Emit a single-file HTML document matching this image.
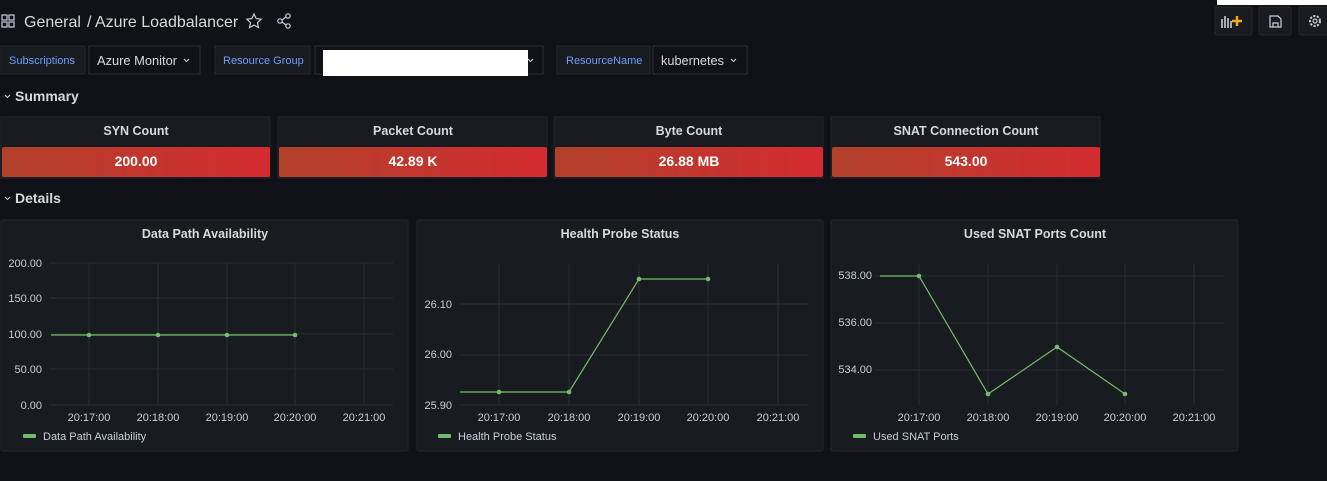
<!DOCTYPE html>
<html><head><meta charset="utf-8"><style>
html,body{margin:0;padding:0;background:#111217;width:1327px;height:481px;overflow:hidden;font-family:"Liberation Sans",sans-serif}
</style></head><body>
<svg width="1327" height="481" viewBox="0 0 1327 481" xmlns="http://www.w3.org/2000/svg" font-family="Liberation Sans, sans-serif">
<defs>
<linearGradient id="rg" x1="0" x2="1"><stop offset="0" stop-color="#b0402a"/><stop offset="1" stop-color="#d42b30"/></linearGradient>
</defs>
<rect width="1327" height="481" fill="#111217"/>
<g fill="none" stroke="#ccccdc" stroke-width="1.2">
<rect x="2" y="15" width="5" height="5"/><rect x="9" y="15" width="5" height="5"/><rect x="2" y="22" width="5" height="5"/><rect x="9" y="22" width="5" height="5"/>
</g>
<text x="24" y="27" fill="#d8d9da" font-size="16">General</text>
<text x="87" y="27" fill="#d8d9da" font-size="16">/ Azure Loadbalancer</text>
<path d="M254 14 l2.2 4.6 5 .6 -3.7 3.4 1 5 -4.5-2.5 -4.5 2.5 1-5 -3.7-3.4 5-.6z" fill="none" stroke="#ccccdc" stroke-width="1.2"/>
<g fill="none" stroke="#ccccdc" stroke-width="1.2"><circle cx="288" cy="16" r="2.2"/><circle cx="288" cy="26" r="2.2"/><circle cx="280" cy="21" r="2.2"/><path d="M282 20 l4-3 M282 22 l4 3"/></g>
<rect x="1217" y="0" width="110" height="5" fill="#fff"/>
<rect x="1215" y="7" width="37" height="28" rx="2" fill="#181b1f" stroke="#24272d"/>
<rect x="1221" y="19" width="2" height="9" fill="#aaa"/><rect x="1224" y="16" width="2" height="12" fill="#aaa"/><rect x="1227" y="18" width="2" height="10" fill="#aaa"/><rect x="1230" y="21" width="2" height="7" fill="#aaa"/>
<path d="M1237 16v10M1232 21h10" stroke="#f5a623" stroke-width="2.5"/>
<rect x="1259" y="7" width="32" height="28" rx="2" fill="#181b1f" stroke="#24272d"/>
<path d="M1270 16h8l3 3v8h-11z M1273 27v-4h5v4" fill="none" stroke="#ccccdc" stroke-width="1.2"/>
<rect x="1299" y="7" width="32" height="28" rx="2" fill="#181b1f" stroke="#24272d"/>
<circle cx="1315" cy="21" r="5" fill="none" stroke="#ccccdc" stroke-width="2" stroke-dasharray="2.2 1.4"/><circle cx="1315" cy="21" r="2" fill="none" stroke="#ccccdc" stroke-width="1.2"/>
<g font-size="11" fill="#6e9fff">
<rect x="1" y="46" width="84" height="28" fill="#181b1f" stroke="#24272d"/><text x="9" y="64">Subscriptions</text>
<rect x="215" y="46" width="95" height="28" fill="#181b1f" stroke="#24272d"/><text x="223" y="64">Resource Group</text>
<rect x="557" y="46" width="93" height="28" fill="#181b1f" stroke="#24272d"/><text x="566" y="64">ResourceName</text>
</g>
<g font-size="13" fill="#d8d9da">
<rect x="89" y="46" width="111" height="28" fill="#111217" stroke="#2c3038"/><text x="97" y="65" textLength="80" lengthAdjust="spacingAndGlyphs">Azure Monitor</text>
<rect x="315" y="46" width="228" height="28" fill="#111217" stroke="#2c3038"/>
<rect x="323" y="50" width="205" height="26" fill="#fff"/>
<rect x="653" y="46" width="94" height="28" fill="#111217" stroke="#2c3038"/><text x="661" y="65" textLength="63" lengthAdjust="spacingAndGlyphs">kubernetes</text>
</g>
<g fill="none" stroke="#ccccdc" stroke-width="1.1"><path d="M184 59l2.5 2.5 2.5-2.5M528 59l2.5 2.5 2.5-2.5M731 59l2.5 2.5 2.5-2.5M5 95l2.5 2.5 2.5-2.5M5 197l2.5 2.5 2.5-2.5"/></g>
<text x="15" y="101" fill="#d8d9da" font-size="14" font-weight="bold">Summary</text>
<text x="15" y="203" fill="#d8d9da" font-size="14" font-weight="bold">Details</text>
<g font-size="12.5" font-weight="bold" text-anchor="middle">
<rect x="1" y="117" width="269" height="61" fill="#181b1f" stroke="#22252b"/><rect x="2" y="147" width="268" height="30" rx="2" fill="url(#rg)"/>
<text x="136" y="135" fill="#d8d9da">SYN Count</text><text x="136" y="166" fill="#fff" font-size="14">200.00</text>
<rect x="278" y="117" width="269" height="61" fill="#181b1f" stroke="#22252b"/><rect x="279" y="147" width="268" height="30" rx="2" fill="url(#rg)"/>
<text x="413" y="135" fill="#d8d9da">Packet Count</text><text x="413" y="166" fill="#fff" font-size="14">42.89 K</text>
<rect x="554" y="117" width="269" height="61" fill="#181b1f" stroke="#22252b"/><rect x="555" y="147" width="268" height="30" rx="2" fill="url(#rg)"/>
<text x="689" y="135" fill="#d8d9da">Byte Count</text><text x="689" y="166" fill="#fff" font-size="14">26.88 MB</text>
<rect x="831" y="117" width="269" height="61" fill="#181b1f" stroke="#22252b"/><rect x="832" y="147" width="268" height="30" rx="2" fill="url(#rg)"/>
<text x="966" y="135" fill="#d8d9da">SNAT Connection Count</text><text x="966" y="166" fill="#fff" font-size="14">543.00</text>
</g>
<g fill="#181b1f" stroke="#22252b"><rect x="1" y="220" width="407" height="231" rx="2"/><rect x="417" y="220" width="406" height="231" rx="2"/><rect x="831" y="220" width="407" height="231" rx="2"/></g>
<g font-size="12.5" font-weight="bold" fill="#d8d9da" text-anchor="middle">
<text x="205" y="238">Data Path Availability</text><text x="620" y="238">Health Probe Status</text><text x="1035" y="238">Used SNAT Ports Count</text>
</g>
<g stroke="#2a2d33" stroke-width="1">
<path d="M50 263H393M50 298H393M50 334H393M50 369H393M50 405H393M89 263V405M158 263V405M227 263V405M295 263V405M364 263V405"/>
<path d="M460 304H808M460 355H808M460 405H808M499 264V405M569 264V405M639 264V405M708 264V405M778 264V405"/>
<path d="M875 276H1224M875 323H1224M875 370H1224M919 264V405M988 264V405M1057 264V405M1125 264V405M1194 264V405"/>
</g>
<g font-size="11" fill="#c7d0d9">
<g text-anchor="end"><text x="42" y="267">200.00</text><text x="42" y="302">150.00</text><text x="42" y="338">100.00</text><text x="42" y="373">50.00</text><text x="42" y="409">0.00</text>
<text x="452" y="308">26.10</text><text x="452" y="358">26.00</text><text x="452" y="409">25.90</text>
<text x="872" y="279">538.00</text><text x="872" y="326">536.00</text><text x="872" y="373">534.00</text></g>
<g text-anchor="middle"><text x="89" y="421">20:17:00</text><text x="158" y="421">20:18:00</text><text x="227" y="421">20:19:00</text><text x="295" y="421">20:20:00</text><text x="364" y="421">20:21:00</text>
<text x="499" y="421">20:17:00</text><text x="569" y="421">20:18:00</text><text x="639" y="421">20:19:00</text><text x="708" y="421">20:20:00</text><text x="778" y="421">20:21:00</text>
<text x="919" y="421">20:17:00</text><text x="988" y="421">20:18:00</text><text x="1057" y="421">20:19:00</text><text x="1125" y="421">20:20:00</text><text x="1194" y="421">20:21:00</text></g>
<text x="43" y="440">Data Path Availability</text><text x="458" y="440">Health Probe Status</text><text x="873" y="440">Used SNAT Ports</text>
</g>
<g fill="#73bf69"><rect x="23" y="434" width="13" height="4" rx="1"/><rect x="438" y="434" width="13" height="4" rx="1"/><rect x="853" y="434" width="13" height="4" rx="1"/></g>
<g fill="none" stroke="#73bf69" stroke-width="1.2">
<path d="M51 335H295"/><path d="M460 392H569L639 279H708"/><path d="M880 276H919L988 394L1057 347L1125 394"/>
</g>
<g fill="#73bf69">
<circle cx="89" cy="335" r="2.3"/><circle cx="158" cy="335" r="2.3"/><circle cx="227" cy="335" r="2.3"/><circle cx="295" cy="335" r="2.3"/>
<circle cx="499" cy="392" r="2.3"/><circle cx="569" cy="392" r="2.3"/><circle cx="639" cy="279" r="2.3"/><circle cx="708" cy="279" r="2.3"/>
<circle cx="919" cy="276" r="2.3"/><circle cx="988" cy="394" r="2.3"/><circle cx="1057" cy="347" r="2.3"/><circle cx="1125" cy="394" r="2.3"/>
</g>
</svg>
</body></html>
